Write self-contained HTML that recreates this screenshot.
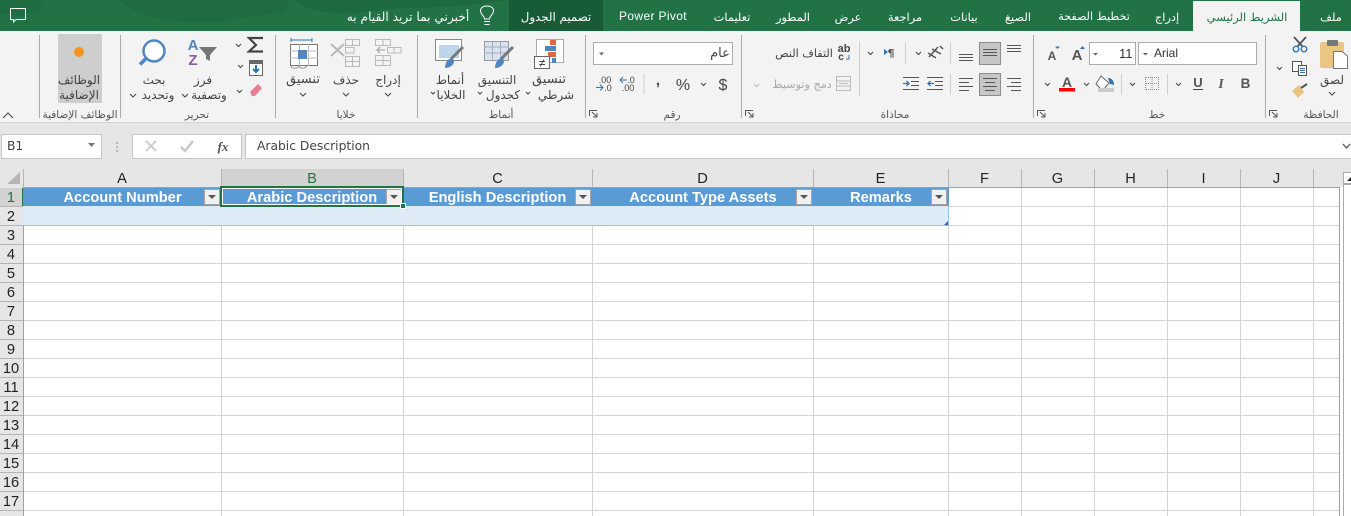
<!DOCTYPE html>
<html lang="ar"><head><meta charset="utf-8"><title>Excel</title>
<style>
html,body{margin:0;padding:0;width:1351px;height:516px;overflow:hidden;background:#fff;font-family:"Liberation Sans","DejaVu Sans",sans-serif}
.a{position:absolute}
.t{position:absolute;white-space:nowrap;transform:translateX(-50%);font-size:12px;line-height:14px;color:#444;font-family:"DejaVu Sans","Liberation Sans",sans-serif}
.w{color:#fff;font-size:11.4px}
.g{color:#555;font-size:10.5px}
.m{font-size:11.2px}
.box{position:absolute;background:#fff;border:1px solid #ababab;box-sizing:border-box}
.col{position:absolute;top:171px;height:17px;line-height:17px;text-align:center;font-size:14.67px;color:#222}
.row{position:absolute;left:0;width:22px;height:19px;line-height:19px;text-align:center;font-size:14.67px;color:#222}
.hd{position:absolute;top:189px;height:18px;line-height:18px;color:#fff;font-weight:bold;font-size:14.67px;white-space:nowrap;transform:translateX(-50%)}
.fb{position:absolute;top:189px;width:16px;height:16px;box-sizing:border-box;background:#f0f0f0;border:1px solid #a6a6a6}
.fb:after{content:"";position:absolute;left:3px;top:5px;border-left:4px solid transparent;border-right:4px solid transparent;border-top:4px solid #555}
</style></head><body>

<div class="a" style="left:0;top:0;width:1351px;height:31px;background:#217346"></div>
<svg class="a" style="left:0;top:0" width="1351" height="31">
<path d="M120 0C130 12 150 18 185 22C225 26 255 14 285 12L290 0Z" fill="#1f6c42"/>
<path d="M0 0H40C50 10 30 20 0 14Z" fill="#1f6c42"/>
<path d="M295 0C310 14 340 16 380 10C410 6 450 10 510 0Z" fill="#1e6a40"/>
<rect x="509" y="0" width="94" height="31" fill="#185c37"/>
<rect x="1193" y="1" width="107" height="30" fill="#f3f3f3"/>
<path d="M10.500 8.500H25.500V19.500H16L13.500 22V19.500H10.500Z" fill="none" stroke="#fff"/>
<path d="M484.500 23.500H489.500M484 20.500H490M484.500 18C484.500 15 480.500 13.500 480.500 9.500C480.500 3.500 493.500 3.500 493.500 9.500C493.500 13.500 489.500 15 489.500 18Z" fill="none" stroke="#fff" transform="translate(0,1)"/>
</svg>
<div class="t w" style="left:408px;top:10px;font-size:12.2px">أخبرني بما تريد القيام به</div>
<div class="t w" style="left:556px;top:10px;font-size:11.8px">تصميم الجدول</div>
<div class="t w" style="left:653px;top:9px;font-family:'Liberation Sans',sans-serif;font-size:12px;letter-spacing:.35px">Power Pivot</div>
<div class="t w" style="left:732px;top:10px">تعليمات</div>
<div class="t w" style="left:793px;top:10px">المطور</div>
<div class="t w" style="left:848px;top:10px">عرض</div>
<div class="t w" style="left:905px;top:10px">مراجعة</div>
<div class="t w" style="left:964px;top:10px">بيانات</div>
<div class="t w" style="left:1018px;top:10px">الصيغ</div>
<div class="t w" style="left:1094px;top:10px;font-size:11.1px">تخطيط الصفحة</div>
<div class="t w" style="left:1167px;top:10px">إدراج</div>
<div class="t" style="left:1247px;top:10px;color:#217346;font-size:11.5px">الشريط الرئيسي</div>
<div class="t w" style="left:1331px;top:10px">ملف</div>

<div class="a" style="left:0;top:31px;width:1351px;height:91px;background:#f3f3f3;border-bottom:1px solid #d4d4d4"></div>
<div class="a" style="left:0;top:123px;width:1351px;height:47px;background:#e6e6e6"></div>
<div class="a" style="left:58px;top:34px;width:44px;height:69px;background:#cecece"></div>

<div class="box" style="left:593px;top:42px;width:140px;height:23px"></div>
<div class="box" style="left:1089px;top:42px;width:47px;height:23px"></div>
<div class="box" style="left:1138px;top:42px;width:119px;height:23px"></div>

<svg class="a" style="left:0;top:31px;overflow:visible" width="1351" height="92">
<g transform="translate(0,-31)">
<g stroke="#ababab" stroke-width="1">
<path d="M39.500 35V118M120.500 35V118M275.500 35V118M417.500 35V118M585.500 35V118M741.500 35V118M1033.500 35V118M1265.500 35V118"/>
<path d="M644 74V94M859.500 41V96M905.500 43V64M950.500 43V64M950.500 74V95M1121.500 74V95M1167.500 74V95" stroke="#cfcfcf"/>
</g>
<circle cx="79" cy="52" r="5" fill="#f7941d"/>
<path d="M3 118L8 113L13 118" fill="none" stroke="#444"/>

<!-- find -->
<circle cx="154" cy="51" r="10.500" fill="#fff" stroke="#4f86c0" stroke-width="2.500"/>
<path d="M146.500 58L140 64.500" stroke="#4f86c0" stroke-width="3.500"/>
<!-- sort -->
<text x="193" y="50" font-size="15" font-weight="bold" fill="#4f86c0" text-anchor="middle" font-family="Liberation Sans">A</text>
<text x="193" y="65" font-size="15" font-weight="bold" fill="#8e5ba6" text-anchor="middle" font-family="Liberation Sans">Z</text>
<path d="M199 47H217L210 55V61L206 59V55Z" fill="#777"/>
<!-- sum/fill/clear -->
<path d="M263 38H249L256 45L249 51.500H263" fill="none" stroke="#444" stroke-width="2.200"/>
<rect x="249.500" y="60.500" width="13" height="15" fill="#fff" stroke="#666"/><rect x="249" y="60" width="14" height="4" fill="#666"/>
<path d="M256 65V72M253 69L256 72L259 69" fill="none" stroke="#2e75b6" stroke-width="2"/>
<path d="M250 92L258 84L262 88L255 96H252Z" fill="#e87d94"/>
<path d="M236 44L238.500 46.500L241 44M238 65L240.500 67.500L243 65M237 90L239.500 92.500L242 90M130 94L133 97L136 94M182 94L185 97L188 94M300 93L303 96L306 93M343 93L346 96L349 93M385 93L388 96L391 93" fill="none" stroke="#444"/>
<!-- format -->
<path d="M291 40H312M291 38V42M312 38V42" stroke="#2e75b6" fill="none"/>
<rect x="290.500" y="44.500" width="27" height="21" fill="#fff" stroke="#777"/>
<path d="M290 51H318M290 58H318M299.500 44V66M308.500 44V66" stroke="#bbb"/>
<rect x="298" y="50" width="9" height="9" fill="#4f86c0"/>
<path d="M291 66C292 69 297 69 299 66C300 69 305 69 307 66" fill="none" stroke="#999"/>
<!-- delete -->
<g fill="none" stroke="#b9b9b9"><path d="M345.500 39.500H359.500V45.500H345.500ZM345.500 56.500H359.500V66.500H345.500ZM352.500 39.500V45.500M352.500 56.500V66.500M345.500 61.500H359.500M345.500 47.500H354V53H345.500Z"/><path d="M331 44L344 56M344 44L331 56" stroke-width="2"/></g>
<!-- insert -->
<g fill="none" stroke="#b9b9b9"><path d="M375.500 39.500H390.500V45.500H375.500ZM375.500 55.500H390.500V65.500H375.500ZM383 39.500V45.500M383 55.500V65.500M375.500 60.500H390.500M387.500 47.500H401V53H387.500ZM394 47.500V53"/><path d="M385 50H377M380 47L377 50L380 53" stroke="#999"/></g>
<!-- styles -->
<rect x="435.500" y="39.500" width="26" height="21" fill="#fff" stroke="#888"/><rect x="439" y="45" width="20" height="13" fill="#bdd4ea"/>
<path d="M463 47L451 59" stroke="#777" stroke-width="3"/><path d="M445 68C445 61 450 57 453 59C456 62 452 68 445 68Z" fill="#4f86c0"/>
<rect x="484.500" y="41.500" width="24" height="19" fill="#d7e3f0" stroke="#999"/><path d="M484 47H508M484 53H508M492.500 41V60M500.500 41V60" stroke="#aab"/>
<path d="M513 47L501 59" stroke="#777" stroke-width="3"/><path d="M495 68C495 61 500 57 503 59C506 62 502 68 495 68Z" fill="#4f86c0"/>
<rect x="536.500" y="39.500" width="27" height="23" fill="#fff" stroke="#aaa"/>
<rect x="550" y="40" width="6" height="5" fill="#e0683c"/><rect x="545" y="46" width="11" height="5" fill="#4f86c0"/><rect x="548" y="52" width="8" height="5" fill="#e0683c"/><rect x="552" y="58" width="4" height="5" fill="#4f86c0"/>
<rect x="534.500" y="56.500" width="15" height="12" fill="#fff" stroke="#666"/>
<text x="542" y="67" font-size="12" fill="#333" text-anchor="middle" font-family="Liberation Sans">≠</text>
<path d="M431 92L433 94L435 92M478 92L480 94L482 92M526 92L528 94L530 92" fill="none" stroke="#444"/>
<!-- number -->
<path d="M599 52.500H604L601.500 55.500Z" fill="#666"/>
<text x="723" y="90" font-size="16" fill="#444" text-anchor="middle" font-family="Liberation Sans">$</text>
<text x="683" y="90" font-size="16" fill="#444" text-anchor="middle" font-family="Liberation Sans">%</text>
<text x="658" y="85" font-size="15" font-weight="bold" fill="#444" text-anchor="middle" font-family="Liberation Sans">,</text>
<path d="M701 83L703.500 85.500L706 83" fill="none" stroke="#444"/>
<text x="605" y="83" font-size="9" fill="#444" text-anchor="middle" font-family="Liberation Sans">.00</text>
<text x="608" y="91" font-size="9" fill="#444" text-anchor="middle" font-family="Liberation Sans">.0</text>
<path d="M596 87.500H603M600 84.500L603 87.500L600 90.500" fill="none" stroke="#2e75b6"/>
<text x="631" y="83" font-size="9" fill="#444" text-anchor="middle" font-family="Liberation Sans">.0</text>
<text x="628" y="91" font-size="9" fill="#444" text-anchor="middle" font-family="Liberation Sans">.00</text>
<path d="M627 80H620M623 77L620 80L623 83" fill="none" stroke="#2e75b6"/>
<!-- launchers -->
<g fill="none" stroke="#555"><path d="M589.500 116V110.500H597M592 112L597 117M597 113V117H593"/><path d="M745.500 116V110.500H753M748 112L753 117M753 113V117H749"/><path d="M1037.500 116V110.500H1045M1040 112L1045 117M1045 113V117H1041"/><path d="M1269.500 116V110.500H1277M1272 112L1277 117M1277 113V117H1273"/></g>
<!-- wrap / merge -->
<text x="844" y="52" font-size="11" fill="#444" text-anchor="middle" font-family="Liberation Sans" font-weight="bold">ab</text>
<text x="841" y="60" font-size="10" fill="#444" text-anchor="middle" font-family="Liberation Sans" font-weight="bold">c</text>
<path d="M849 55V59H846" fill="none" stroke="#2e75b6"/>
<rect x="836.500" y="76.500" width="14" height="14" fill="none" stroke="#bbb"/><path d="M836 81H851M836 86H851M839 83.500H848" stroke="#bbb"/>
<path d="M754 84L756.500 86.500L759 84" fill="none" stroke="#bbb"/>
<path d="M868 52L870.500 54.500L873 52M916 52L918.500 54.500L921 52M1045 83L1047.500 85.500L1050 83M1084 83L1086.500 85.500L1089 83M1130 83L1132.500 85.500L1135 83M1176 83L1178.500 85.500L1181 83M1277 67L1279.500 69.500L1282 67" fill="none" stroke="#444"/>
<text x="891" y="57" font-size="11" fill="#555" text-anchor="middle" font-family="DejaVu Sans" font-weight="bold">¶</text><path d="M884 49V55L888 52Z" fill="#2e75b6"/>
<path d="M929 57L938 47M932 49L941 54M928 53L936 58M940 46L943 49" fill="none" stroke="#555" stroke-width="1.500"/>
<!-- align buttons -->
<rect x="979.500" y="42.500" width="21" height="22" fill="#c6c6c6" stroke="#8c8c8c"/>
<rect x="979.500" y="73.500" width="21" height="22" fill="#c6c6c6" stroke="#8c8c8c"/>
<g stroke="#555"><path d="M959 54.500H973M959 57.500H973M959 60.500H973"/><path d="M983 49.500H997M983 52.500H997M983 55.500H997"/><path d="M1007 45.500H1021M1007 48.500H1021M1007 51.500H1021"/>
<path d="M959 78.500H973M959 82.500H969M959 86.500H973M959 90.500H969"/><path d="M983 78.500H997M985 82.500H995M983 86.500H997M985 90.500H995"/><path d="M1007 78.500H1021M1011 82.500H1021M1007 86.500H1021M1011 90.500H1021"/>
<path d="M927 77.500H943M935 81.500H943M935 85.500H943M927 89.500H943"/><path d="M903 77.500H919M911 81.500H919M911 85.500H919M903 89.500H919"/></g>
<path d="M903 83.500H909M906.500 81L909 83.500L906.500 86" fill="none" stroke="#2e75b6" stroke-width="1.300"/><path d="M934 83.500H928M930.500 81L928 83.500L930.500 86" fill="none" stroke="#2e75b6" stroke-width="1.300"/>
<!-- font -->
<text x="1052" y="60" font-size="12" font-weight="bold" fill="#555" text-anchor="middle" font-family="Liberation Sans">A</text><path d="M1055 46.500H1060L1057.500 49Z" fill="#2e75b6"/>
<text x="1077" y="60" font-size="15" font-weight="bold" fill="#555" text-anchor="middle" font-family="Liberation Sans">A</text><path d="M1080 49H1085L1082.500 46Z" fill="#2e75b6"/>
<text x="1245.500" y="88" font-size="13.500" font-weight="bold" fill="#555" text-anchor="middle" font-family="Liberation Sans">B</text>
<text x="1221" y="88" font-size="13.500" font-style="italic" font-weight="bold" fill="#555" text-anchor="middle" font-family="Liberation Serif">I</text>
<text x="1198" y="87" font-size="13" font-weight="bold" fill="#555" text-anchor="middle" font-family="Liberation Sans">U</text><path d="M1193 89.500H1203" stroke="#444"/>
<path d="M1146 77.500H1158M1146 89.500H1158M1146 83.500H1158M1152 77V90M1145.500 77V90M1158.500 77V90" stroke="#888" stroke-dasharray="1 1"/>
<path d="M1101 76L1109 83L1104 89H1101L1096 84Z" fill="#fff" stroke="#666"/><path d="M1108 78C1112 78 1114 81 1114 85L1110 84Z" fill="#2e75b6"/><rect x="1098" y="88" width="16" height="4" fill="#ccc"/>
<text x="1067" y="87" font-size="14" font-weight="bold" fill="#555" text-anchor="middle" font-family="Liberation Sans">A</text><rect x="1059" y="88" width="16" height="3.500" fill="#f00"/>
<path d="M1093 53H1098L1095.500 55.500ZM1143 53H1148L1145.500 55.500Z" fill="#666"/>
<!-- clipboard -->
<path d="M1294 37L1303 47M1306 37L1297 47" stroke="#555" stroke-width="1.800"/><circle cx="1296" cy="49" r="2.800" fill="none" stroke="#2e75b6" stroke-width="1.400"/><circle cx="1304" cy="49" r="2.800" fill="none" stroke="#2e75b6" stroke-width="1.400"/>
<rect x="1292.500" y="61.500" width="9" height="10" fill="#fff" stroke="#555"/><rect x="1298.500" y="65.500" width="8" height="10" fill="#fff" stroke="#555"/><path d="M1300 68.500H1305M1300 70.500H1305M1300 72.500H1305" stroke="#2e75b6"/>
<path d="M1292 91L1299 85L1304 92L1298 98C1296 95 1294 93 1292 91Z" fill="#e8c47e"/><path d="M1301 88L1307 84" stroke="#555" stroke-width="2.200"/>
<rect x="1320" y="42" width="24" height="26" rx="2" fill="#eac584"/><rect x="1327" y="40" width="11" height="6" rx="1" fill="#777"/>
<path d="M1333.500 51.500H1342L1347.500 56V68.500H1333.500Z" fill="#fff" stroke="#777"/>
</g></svg>

<div class="t" style="left:79px;top:73px">الوظائف</div>
<div class="t" style="left:79px;top:88px">الإضافية</div>
<div class="t g" style="left:80px;top:108px">الوظائف الإضافية</div>
<div class="t" style="left:154px;top:73px">بحث</div>
<div class="t" style="left:158px;top:88px">وتحديد</div>
<div class="t" style="left:203px;top:73px">فرز</div>
<div class="t" style="left:209px;top:88px">وتصفية</div>
<div class="t g" style="left:197px;top:108px">تحرير</div>
<div class="t" style="left:303px;top:73px;font-size:13px">تنسيق</div>
<div class="t" style="left:346px;top:73px">حذف</div>
<div class="t" style="left:388px;top:73px">إدراج</div>
<div class="t g" style="left:346px;top:108px">خلايا</div>
<div class="t" style="left:450px;top:73px">أنماط</div>
<div class="t" style="left:451px;top:88px">الخلايا</div>
<div class="t" style="left:497px;top:73px">التنسيق</div>
<div class="t" style="left:503px;top:88px">كجدول</div>
<div class="t" style="left:549px;top:73px;font-size:13px">تنسيق</div>
<div class="t" style="left:556px;top:88px">شرطي</div>
<div class="t g" style="left:501px;top:108px">أنماط</div>
<div class="t" style="left:720px;top:47px;font-size:13px">عام</div>
<div class="t g" style="left:672px;top:108px">رقم</div>
<div class="t m" style="left:804px;top:47px">التفاف النص</div>
<div class="t m" style="left:802px;top:78px;color:#aaa">دمج وتوسيط</div>
<div class="t g" style="left:895px;top:108px">محاذاة</div>
<div class="a" style="left:1119px;top:46px;font-size:13px;line-height:15px;color:#333">11</div>
<div class="a" style="left:1154px;top:46px;font-size:12px;line-height:15px;color:#333">Arial</div>
<div class="t g" style="left:1157px;top:108px">خط</div>
<div class="t" style="left:1332px;top:73px">لصق</div>
<svg class="a" style="left:1328px;top:91px" width="10" height="6"><path d="M1 1L4 4L7 1" fill="none" stroke="#444"/></svg>
<div class="t g" style="left:1321px;top:108px">الحافظة</div>

<!-- formula bar -->
<div class="box" style="left:1px;top:134px;width:101px;height:25px;border-color:#c6c6c6"></div>
<div class="a" style="left:7px;top:139px;font-size:12.3px;line-height:15px;color:#444;font-family:'DejaVu Sans',sans-serif">B1</div>
<svg class="a" style="left:88px;top:143px" width="8" height="5"><path d="M0 0H7L3.500 4Z" fill="#777"/></svg>
<svg class="a" style="left:115px;top:140px" width="4" height="12"><path d="M1 2h2v2h-2zM1 6h2v2h-2zM1 10h2v2h-2z" fill="#b5b5b5"/></svg>
<div class="box" style="left:132px;top:134px;width:110px;height:25px;border-color:#c6c6c6"></div>
<svg class="a" style="left:132px;top:134px" width="110" height="25">
<path d="M14 7L24 17M24 7L14 17" stroke="#c9c9c9" stroke-width="1.800"/>
<path d="M49 13L53 17L61 7" fill="none" stroke="#c9c9c9" stroke-width="2.500"/>
<text x="91" y="17" font-size="13" font-style="italic" font-weight="bold" fill="#555" text-anchor="middle" font-family="Liberation Serif">fx</text>
</svg>
<div class="box" style="left:245px;top:134px;width:1107px;height:25px;border-color:#c6c6c6"></div>
<div class="a" style="left:257px;top:139px;font-size:12.3px;line-height:15px;color:#444;font-family:'DejaVu Sans',sans-serif">Arabic Description</div>
<svg class="a" style="left:1342px;top:143px" width="9" height="7"><path d="M1 1L4.500 5L8 1" fill="none" stroke="#666" stroke-width="1.500"/></svg>

<!-- grid -->
<svg class="a" style="left:0;top:169px" width="1351" height="347">
<rect x="0" y="0" width="1351" height="18" fill="#e6e6e6"/>
<rect x="0" y="18" width="23" height="329" fill="#e6e6e6"/>
<rect x="221" y="0" width="182" height="18" fill="#d2d2d2"/>
<rect x="0" y="19" width="23" height="18" fill="#d2d2d2"/>
<path d="M7 15L20 15L20 3Z" fill="#b5b5b5"/>
<g stroke="#d4d4d4"><path d="M221.500 18V347M403.500 18V347M592.500 18V347M813.500 18V347M948.500 18V347M1021.500 18V347M1094.500 18V347M1167.500 18V347M1240.500 18V347M1313.500 18V347"/>
<path d="M23 37.500H1339M23 56.500H1339M23 75.500H1339M23 94.500H1339M23 113.500H1339M23 132.500H1339M23 151.500H1339M23 170.500H1339M23 189.500H1339M23 208.500H1339M23 227.500H1339M23 246.500H1339M23 265.500H1339M23 284.500H1339M23 303.500H1339M23 322.500H1339M23 341.500H1339"/></g>
<g stroke="#b5b5b5"><path d="M23.500 0V18M221.500 0V18M403.500 0V18M592.500 0V18M813.500 0V18M948.500 0V18M1021.500 0V18M1094.500 0V18M1167.500 0V18M1240.500 0V18M1313.500 0V18"/>
<path d="M0 37.500H23M0 56.500H23M0 75.500H23M0 94.500H23M0 113.500H23M0 132.500H23M0 151.500H23M0 170.500H23M0 189.500H23M0 208.500H23M0 227.500H23M0 246.500H23M0 265.500H23M0 284.500H23M0 303.500H23M0 322.500H23M0 341.500H23"/></g>
<path d="M23 18.500H1339.500V347M23.500 18V347" fill="none" stroke="#9f9f9f"/>
<rect x="23" y="19" width="926" height="18" fill="#5b9bd5"/>
<rect x="23" y="37" width="926" height="19" fill="#ddebf7"/>
<path d="M23 56.500H949M948.500 37V57" stroke="#9bc2e6"/>
<path d="M944 56H948V52Z" fill="#3f5fb5"/>
<path d="M22.500 19V37" stroke="#217346" stroke-width="1"/>
<rect x="1343.500" y="3.500" width="9" height="344" fill="#fff" stroke="#ababab"/>
<path d="M1347 12H1351V8Z" fill="#222"/>
<rect x="1343" y="14" width="8" height="2" fill="#ababab"/>
</svg>

<div class="col" style="left:23px;width:198px">A</div>
<div class="col" style="left:221px;width:182px;color:#217346">B</div>
<div class="col" style="left:403px;width:189px">C</div>
<div class="col" style="left:592px;width:221px">D</div>
<div class="col" style="left:813px;width:135px">E</div>
<div class="col" style="left:948px;width:73px">F</div>
<div class="col" style="left:1021px;width:73px">G</div>
<div class="col" style="left:1094px;width:73px">H</div>
<div class="col" style="left:1167px;width:73px">I</div>
<div class="col" style="left:1240px;width:73px">J</div>

<div class="row" style="top:189px;color:#217346">1</div>
<div class="row" style="top:208px">2</div>
<div class="row" style="top:227px">3</div>
<div class="row" style="top:246px">4</div>
<div class="row" style="top:265px">5</div>
<div class="row" style="top:284px">6</div>
<div class="row" style="top:303px">7</div>
<div class="row" style="top:322px">8</div>
<div class="row" style="top:341px">9</div>
<div class="row" style="top:360px">10</div>
<div class="row" style="top:379px">11</div>
<div class="row" style="top:398px">12</div>
<div class="row" style="top:417px">13</div>
<div class="row" style="top:436px">14</div>
<div class="row" style="top:455px">15</div>
<div class="row" style="top:474px">16</div>
<div class="row" style="top:493px">17</div>

<div class="hd" style="left:122.500px">Account Number</div>
<div class="hd" style="left:312px">Arabic Description</div>
<div class="hd" style="left:497.500px">English Description</div>
<div class="hd" style="left:703px">Account Type Assets</div>
<div class="hd" style="left:881px">Remarks</div>
<div class="fb" style="left:204px"></div>
<div class="fb" style="left:386px"></div>
<div class="fb" style="left:575px"></div>
<div class="fb" style="left:796px"></div>
<div class="fb" style="left:931px"></div>
<div class="a" style="left:220px;top:186px;width:184px;height:21px;box-sizing:border-box;border:2px solid #217346;box-shadow:inset 0 0 0 1px #fff"></div>
<div class="a" style="left:400px;top:203px;width:6px;height:6px;background:#217346;border:1px solid #fff;box-sizing:border-box"></div>
</body></html>
